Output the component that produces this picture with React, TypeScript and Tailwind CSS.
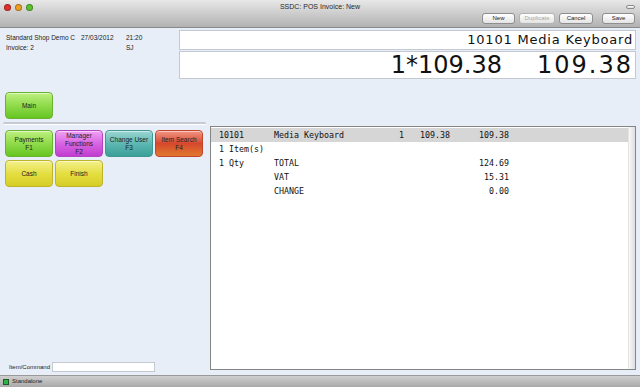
import React from "react";

const btnColors: Record<string, string> = {
  green: "border-[#6ab332] bg-gradient-to-b from-[#bdf07e] via-[#8fdb4a] to-[#66c520]",
  magenta: "border-[#b244c2] bg-gradient-to-b from-[#f1a0f5] via-[#d764e2] to-[#c23bcf]",
  teal: "border-[#3f9893] bg-gradient-to-b from-[#9ad6d2] via-[#5db8b3] to-[#3b9f99]",
  red: "border-[#c2442c] bg-gradient-to-b from-[#f19482] via-[#d6472c] to-[#e0782e]",
  yellow: "border-[#bdb42a] bg-gradient-to-b from-[#f4f088] via-[#e4de40] to-[#d6ce24]",
};

function PadButton({ color, lines }: { color: string; lines: string[] }) {
  return (
    <div
      className={`w-[48px] h-[27px] rounded-[4px] border flex flex-col items-center justify-center text-[6.5px] leading-[8px] text-[#222] shadow-[inset_0_1px_0_rgba(255,255,255,0.5)] ${btnColors[color]}`}
    >
      {lines.map((l) => (
        <span key={l}>{l}</span>
      ))}
    </div>
  );
}

function ToolButton({ label, w, disabled }: { label: string; w: string; disabled?: boolean }) {
  return (
    <div
      className={`${w} h-[11px] rounded-[3px] border bg-gradient-to-b from-[#ffffff] to-[#e4e4e4] flex items-center justify-center text-[6px] ${
        disabled ? "text-[#a8a8a8] border-[#b4b4b4]" : "text-[#222] border-[#8e8e8e]"
      }`}
    >
      {label}
    </div>
  );
}

function Light({ c }: { c: string }) {
  return <div className={`w-[7px] h-[7px] rounded-full border border-black/30 ${c}`} />;
}

const rows = [
  { a: "10101", b: "Media Keyboard", q: "1", p: "109.38", t: "109.38", head: true },
  { a: "1 Item(s)", b: "", q: "", p: "", t: "" },
  { a: "1 Qty", b: "TOTAL", q: "", p: "", t: "124.69" },
  { a: "", b: "VAT", q: "", p: "", t: "15.31" },
  { a: "", b: "CHANGE", q: "", p: "", t: "0.00" },
];

export default function App() {
  return (
    <div className="w-[640px] h-[387px] flex flex-col bg-[#e8eef8] font-['Liberation_Sans',sans-serif] overflow-hidden">
      {/* title + toolbar */}
      <div className="h-[28px] border-b border-[#8a8a8a] bg-gradient-to-b from-[#e8e8e8] to-[#b2b2b2] flex flex-col">
        <div className="h-[13px] grid grid-cols-[1fr_auto_1fr] items-center px-[4px]">
          <div className="flex gap-[4px] pt-[1px]">
            <Light c="bg-[#e2312a]" />
            <Light c="bg-[#f0a020]" />
            <Light c="bg-[#5cc22c]" />
          </div>
          <div className="text-[7px] text-[#2a2a2a] pt-[1px]">SSDC: POS Invoice: New</div>
          <div className="flex justify-end pr-[1px]">
            <div className="w-[9px] h-[4px] rounded-full border border-[#8a8a8a] bg-gradient-to-b from-white to-[#d8d8d8]" />
          </div>
        </div>
        <div className="flex justify-end pr-[5px] gap-[4px]">
          <ToolButton label="New" w="w-[33px]" />
          <ToolButton label="Duplicate" w="w-[36px]" disabled />
          <ToolButton label="Cancel" w="w-[34px]" />
          <div className="w-[1px]" />
          <ToolButton label="Save" w="w-[33px]" />
        </div>
      </div>

      {/* body */}
      <div className="flex-1 flex flex-col min-h-0">
        <div className="flex h-[51px]">
          <div className="w-[179px] pl-[6px] pt-[5px] text-[6.5px] leading-[10px] text-[#222]">
            <div className="flex">
              <span className="w-[75px]">Standard Shop Demo C</span>
              <span className="w-[45px]">27/03/2012</span>
              <span>21:20</span>
            </div>
            <div className="flex">
              <span className="w-[120px]">Invoice: 2</span>
              <span>SJ</span>
            </div>
          </div>
          <div className="flex-1 pr-[4px] pt-[2px] flex flex-col gap-[1px]">
            <div className="h-[20px] bg-white border border-[#c4c8d0] flex items-center justify-end pr-[2px] font-['DejaVu_Sans',sans-serif] text-[13px] tracking-[0.8px] text-[#111]">
              10101 Media Keyboard
            </div>
            <div className="h-[28px] bg-white border border-[#c4c8d0] flex items-center justify-end pr-[2px] font-['DejaVu_Sans',sans-serif] text-[24px] text-[#111]">
              <span className="mr-[35px] tracking-[0px]">1*109.38</span>
              <span className="tracking-[2px]">109.38</span>
            </div>
          </div>
        </div>

        <div className="flex-1 flex min-h-0">
          {/* left pad */}
          <div className="w-[210px] flex flex-col pt-[13px]">
            <div className="pl-[5px]">
              <PadButton color="green" lines={["Main"]} />
            </div>
            <div className="ml-[3px] mt-[3px] w-[203px] h-[3px] rounded-full bg-[#c6cad2] border-b border-white" />
            <div className="pl-[5px] mt-[5px] flex flex-col gap-[3px]">
              <div className="flex gap-[2px]">
                <PadButton color="green" lines={["Payments", "F1"]} />
                <PadButton color="magenta" lines={["Manager", "Functions", "F2"]} />
                <PadButton color="teal" lines={["Change User", "F3"]} />
                <PadButton color="red" lines={["Item Search", "F4"]} />
              </div>
              <div className="flex gap-[2px]">
                <PadButton color="yellow" lines={["Cash"]} />
                <PadButton color="yellow" lines={["Finish"]} />
              </div>
            </div>
            <div className="mt-auto mb-[3px] flex items-center pl-[9px] gap-[2px]">
              <span className="text-[6px] text-[#222]">Item/Command</span>
              <div className="w-[103px] h-[10px] bg-white border border-[#c4c8d0]" />
            </div>
          </div>

          {/* list */}
          <div className="flex-1 mt-[47px] mb-[5px] mr-[4px] border border-[#858585] bg-white flex min-h-0">
            <div className="flex-1 pt-[1px] font-['DejaVu_Sans_Mono',monospace] text-[8.3px] text-[#111]">
              {rows.map((r, i) => (
                <div
                  key={i}
                  className={`h-[14px] flex items-center pl-[8px] ${r.head ? "bg-[#d6d6d6]" : ""}`}
                >
                  <span className="w-[55px] whitespace-nowrap">{r.a}</span>
                  <span className="w-[125px]">{r.b}</span>
                  <span className="w-[21px]">{r.q}</span>
                  <span className="w-[30px]">{r.p}</span>
                  <span className="w-[59px] text-right">{r.t}</span>
                </div>
              ))}
            </div>
            <div className="w-[7px] border-l border-[#e4e4e4] bg-gradient-to-r from-[#f8f8f8] to-[#dedede]" />
          </div>
        </div>
      </div>

      {/* status bar */}
      <div className="h-[12px] border-t border-[#9a9a9a] bg-gradient-to-b from-[#cfcfcf] to-[#a9a9a9] flex items-center pl-[3px] gap-[3px]">
        <div className="w-[6px] h-[6px] bg-[#2fb24a] border border-[#1d5a25]" />
        <span className="text-[6px] text-[#222]">Standalone</span>
      </div>
    </div>
  );
}
